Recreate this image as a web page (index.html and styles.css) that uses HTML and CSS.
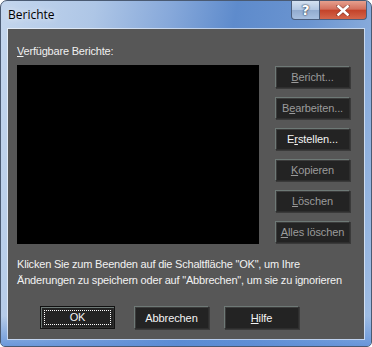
FILE: index.html
```html
<!DOCTYPE html>
<html lang="de">

<head>
    <meta charset="UTF-8">
    <title>Berichte</title>
    <link rel="stylesheet" href="styles.css">
</head>

<body>
    <div class="window">
        <div class="titlebar">
            <span class="title">Berichte</span>
            <div class="caption-buttons">
                <div class="cap-btn help">?</div>
                <div class="cap-btn close">
                    <svg width="14" height="11" viewBox="0 0 14 11">
                        <path d="M2 1 L12 10 M12 1 L2 10" stroke="#3a1a18" stroke-width="4" stroke-linecap="square" opacity="0.35"/>
                        <path d="M2.5 1.5 L11.5 9.5 M11.5 1.5 L2.5 9.5" stroke="#fff" stroke-width="2.6" stroke-linecap="square"/>
                    </svg>
                </div>
            </div>
        </div>

        <div class="client">
            <div class="label"><u>V</u>erfügbare Berichte:</div>
            <div class="main-row">
                <div class="listbox"></div>
                <div class="side-buttons">
                    <button class="btn disabled"><u>B</u>ericht...</button>
                    <button class="btn disabled">B<u>e</u>arbeiten...</button>
                    <button class="btn">E<u>r</u>stellen...</button>
                    <button class="btn disabled"><u>K</u>opieren</button>
                    <button class="btn disabled"><u>L</u>öschen</button>
                    <button class="btn disabled"><u>A</u>lles löschen</button>
                </div>
            </div>
            <p class="hint">Klicken Sie zum Beenden auf die Schaltfläche "OK", um Ihre<br>Änderungen zu speichern oder auf "Abbrechen", um sie zu ignorieren</p>
            <div class="bottom-buttons">
                <button class="btn default"><span class="focus">OK</span></button>
                <button class="btn">Abbrechen</button>
                <button class="btn"><u>H</u>ilfe</button>
            </div>
        </div>
    </div>
</body>

</html>
```

FILE: styles.css
```css
body {
    margin: 0;
    background-color: #fff;
    font-family: "Liberation Sans", Arial, sans-serif;
}

.window {
    width: 372px;
    height: 347px;
    box-sizing: border-box;
    border: 1px solid #4a5a72;
    border-radius: 7px 7px 5px 5px;
    background: linear-gradient(100deg, #c4d6ed 0%, #aec6e6 22%, #86a8da 40%, #5e8bcc 55%, #6a94d0 72%, #a1bee4 100%);
    display: flex;
    flex-direction: column;
    overflow: hidden;
    position: relative;
}

.window::after {
    content: "";
    position: absolute;
    left: 0;
    right: 0;
    bottom: 0;
    height: 30px;
    background: linear-gradient(to bottom, rgba(90, 140, 215, 0) 0%, rgba(90, 140, 215, 0.8) 100%);
    pointer-events: none;
}

.titlebar {
    height: 28px;
    display: flex;
    justify-content: space-between;
    align-items: flex-start;
}

.title {
    font-family: "Open Sans", "Noto Sans", sans-serif;
    font-size: 12px;
    color: #000;
    margin: 5px 0 0 7px;
    text-shadow: 0 0 6px rgba(255, 255, 255, 0.9);
}

.caption-buttons {
    display: flex;
    margin-right: 4px;
}

.cap-btn {
    height: 18px;
    border: 1px solid #4b5e7d;
    border-top: none;
    display: flex;
    align-items: center;
    justify-content: center;
}

.help {
    width: 27px;
    border-radius: 0 0 0 4px;
    background: linear-gradient(to bottom, #d4e1f1 0%, #b3c7e2 48%, #92abcf 52%, #a8c0e0 100%);
    color: #fff;
    font-family: "DejaVu Sans", sans-serif;
    font-weight: bold;
    font-size: 14px;
    text-shadow: 0 0 2px #1e2c44, 0 0 1px #1e2c44;
}

.close {
    width: 46px;
    border-left: none;
    border-radius: 0 0 4px 0;
    background: linear-gradient(to bottom, #e6a08e 0%, #d3705d 45%, #c4432a 52%, #d4664b 100%);
}

.client {
    flex: 1;
    margin: 0 7px 7px 7px;
    background-color: #575757;
    box-shadow: 0 0 0 1px rgba(255, 255, 255, 0.55);
    padding: 16px 14px 0 9px;
    font-size: 11px;
    letter-spacing: -0.2px;
    color: #f0f0f0;
    position: relative;
    z-index: 1;
}

.label {
    line-height: 13px;
    height: 14px;
}

.main-row {
    display: flex;
    margin-top: 6px;
}

.listbox {
    width: 242px;
    height: 179px;
    background-color: #000;
}

.side-buttons {
    display: flex;
    flex-direction: column;
    gap: 9px;
    margin-left: 16px;
    padding-top: 1px;
}

.btn {
    width: 75px;
    height: 22px;
    box-sizing: border-box;
    background-color: #232323;
    border: 1px solid;
    border-color: #6e7976 #2e2e2e #2e2e2e #6e7976;
    box-shadow: inset 1px 1px 0 #3c3c3c, 1px 1px 0 #3a3a3a;
    color: #f4f4f4;
    font-family: "Liberation Sans", Arial, sans-serif;
    font-size: 11px;
    letter-spacing: -0.1px;
    padding: 0;
    cursor: pointer;
}

.btn.disabled {
    color: #9b9b9b;
}

.hint {
    margin: 12px 0 0 0;
    line-height: 16px;
    white-space: nowrap;
    color: #f2f2f2;
}

.bottom-buttons {
    display: flex;
    margin: 18px 0 0 23px;
}

.bottom-buttons .btn {
    height: 23px;
}

.bottom-buttons .btn + .btn {
    margin-left: 19px;
}

.bottom-buttons .btn:last-child {
    margin-left: 15px;
}

.btn.default {
    border: 1px solid #111;
    box-shadow: inset 1px 1px 0 #6e7976, inset -1px -1px 0 #2e2e2e;
    padding: 3px;
}

.focus {
    display: block;
    height: 100%;
    box-sizing: border-box;
    border: 1px dotted #fff;
    line-height: 13px;
}
```
